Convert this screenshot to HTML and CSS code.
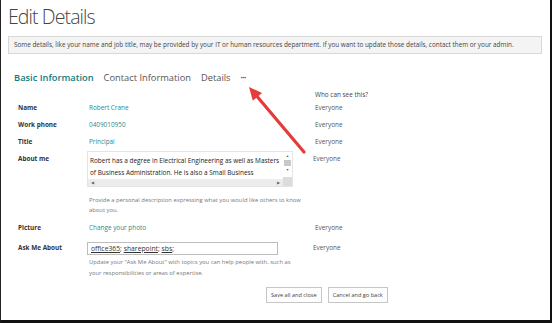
FILE: index.html
```html
<!DOCTYPE html>
<html>
    <head>
        <title>Edit Details</title>
        <meta charset="UTF-8">
        <meta name="viewport" content="width=device-width">
        <link rel="stylesheet" href="styles.css">
    </head>
    <body>
        <div class="frame">
            <h1 class="title">Edit Details</h1>
            <div class="notice">Some details, like your name and job title, may be provided by your IT or human resources department. If you want to update those details, contact them or your admin.</div>

            <ul class="tabs">
                <li class="tab active">Basic Information</li>
                <li class="tab">Contact Information</li>
                <li class="tab">Details</li>
                <li class="tab more">&middot;&middot;&middot;</li>
            </ul>

            <div class="form">
                <div class="who-head">Who can see this?</div>

                <div class="row">
                    <div class="label">Name</div>
                    <div class="value"><a href="#">Robert Crane</a></div>
                    <div class="who">Everyone</div>
                </div>
                <div class="row">
                    <div class="label">Work phone</div>
                    <div class="value"><a href="#">0409010950</a></div>
                    <div class="who">Everyone</div>
                </div>
                <div class="row">
                    <div class="label">Title</div>
                    <div class="value"><a href="#">Principal</a></div>
                    <div class="who">Everyone</div>
                </div>
                <div class="row about">
                    <div class="label">About me</div>
                    <div class="value">
                        <div class="textarea">
                            <div class="ta-text">Robert has a degree in Electrical Engineering as well as Masters of Business Administration. He is also a Small Business<br>Specialist and Microsoft Certified Partner.</div>
                            <div class="vscroll">
                                <span class="arr">&#9650;</span>
                                <span class="thumb"></span>
                                <span class="arr">&#9660;</span>
                            </div>
                            <div class="hscroll">
                                <span class="arr">&#9664;</span>
                                <span class="arr">&#9654;</span>
                            </div>
                            <div class="corner"></div>
                        </div>
                        <p class="hint">Provide a personal description expressing what you would like others to know about you.</p>
                    </div>
                    <div class="who">Everyone</div>
                </div>
                <div class="row">
                    <div class="label">Picture</div>
                    <div class="value"><a href="#">Change your photo</a></div>
                    <div class="who">Everyone</div>
                </div>
                <div class="row ask">
                    <div class="label">Ask Me About</div>
                    <div class="value">
                        <div class="input"><u>office365</u>; <u>sharepoint</u>; <u>sbs</u>;</div>
                        <p class="hint">Update your "Ask Me About" with topics you can help people with, such as your responsibilities or areas of expertise.</p>
                    </div>
                    <div class="who">Everyone</div>
                </div>

                <div class="buttons">
                    <button class="btn">Save all and close</button>
                    <button class="btn">Cancel and go back</button>
                </div>
            </div>

            <svg class="callout" width="80" height="80" viewBox="0 0 80 80">
                <line x1="63" y1="70" x2="14" y2="12" stroke="#e53b3b" stroke-width="3.2" stroke-linecap="round"/>
                <polygon points="8,5 11.8,18.8 21,11" fill="#e53b3b"/>
            </svg>
        </div>
    </body>
</html>
```

FILE: styles.css
```css
*
{
    box-sizing: border-box;
}
body
{
    margin: 0;
    background: #fff;
    font-family: "Open Sans", "Noto Sans", sans-serif;
    color: #333;
}
.frame
{
    position: relative;
    width: 552px;
    height: 323px;
    padding: 0 8px 0 7px;
    border-left: 1px solid #222;
    border-right: 2px solid #111;
    border-bottom: 3px solid #111;
    overflow: hidden;
}
.title
{
    margin: 0;
    padding-top: 3px;
    font-weight: 300;
    font-size: 19.5px;
    letter-spacing: -0.9px;
    line-height: 27px;
    color: #444;
}
.notice
{
    margin-top: 6px;
    height: 18px;
    padding: 0 5px;
    background: #f4f4f4;
    border: 1px solid #d8d8d8;
    font-size: 6.38px;
    line-height: 16px;
    color: #444;
    white-space: nowrap;
    overflow: hidden;
}
.tabs
{
    display: flex;
    align-items: baseline;
    margin: 16px 0 0 6px;
    padding: 0;
    list-style: none;
}
.tab
{
    font-size: 9.3px;
    line-height: 15px;
    color: #555;
    margin-right: 10px;
}
.tab.active
{
    color: #0f7b80;
    font-weight: 600;
}
.tab.more
{
    font-weight: 700;
    font-size: 8px;
    letter-spacing: -0.6px;
    margin-left: 0;
}
.form
{
    padding-left: 10px;
}
.who-head
{
    margin: 5px 0 0 297px;
    font-size: 6.4px;
    line-height: 9px;
    color: #444;
}
.row
{
    display: flex;
    margin-top: 8px;
    font-size: 6.4px;
    line-height: 9px;
}
.who-head + .row
{
    margin-top: 4px;
}
.label
{
    width: 71px;
    font-weight: 700;
    color: #333;
}
.value
{
    width: 226px;
}
.value a
{
    color: #2a8a8e;
    text-decoration: none;
}
.who
{
    color: #555;
}
.row.about .value
{
    margin-left: -2px;
}
.textarea
{
    position: relative;
    width: 206px;
    height: 36px;
    margin-top: -3px;
    border: 1px solid #e4e4e4;
    overflow: hidden;
}
.ta-text
{
    width: 198px;
    height: 27px;
    overflow: hidden;
    padding: 3px 0 0 2px;
    font-size: 6.45px;
    line-height: 11.5px;
    color: #222;
}
.vscroll
{
    position: absolute;
    top: 0;
    right: 0;
    width: 9px;
    height: 27px;
    display: flex;
    flex-direction: column;
    align-items: center;
    background: #fff;
}
.thumb
{
    width: 7px;
    height: 6px;
    background: #c8c8c8;
}
.arr
{
    font-size: 3.5px;
    line-height: 10px;
    color: #666;
}
.vscroll .arr
{
    line-height: 8px;
}
.hscroll
{
    position: absolute;
    left: 0;
    bottom: 0;
    width: 195px;
    height: 7px;
    display: flex;
    justify-content: space-between;
    padding: 0 3px;
    background: #ececec;
}
.hscroll .arr
{
    line-height: 7px;
}
.corner
{
    position: absolute;
    right: 0;
    bottom: 0;
    width: 9px;
    height: 9px;
    background: #dcdcdc;
}
.hint
{
    margin: 8px 0 0 2px;
    width: 214px;
    font-size: 5.85px;
    line-height: 10px;
    color: #777;
}
.row.ask
{
    margin-top: 11px;
}
.row.ask .value
{
    margin-left: -2px;
}
.input
{
    width: 191px;
    height: 13px;
    margin-top: -1px;
    padding-left: 3px;
    border: 1px solid #bdbdbd;
    font-size: 6.8px;
    line-height: 11px;
    color: #333;
}
.row.ask .hint
{
    margin-top: 2px;
    line-height: 11px;
    width: 205px;
}
.buttons
{
    display: flex;
    gap: 6px;
    margin: 8px 0 0 248px;
}
.btn
{
    height: 16px;
    padding: 0 4px;
    background: #fdfdfd;
    border: 1px solid #c6c6c6;
    font-family: inherit;
    font-size: 5.6px;
    color: #444;
}
.callout
{
    position: absolute;
    left: 240px;
    top: 82px;
}
```
